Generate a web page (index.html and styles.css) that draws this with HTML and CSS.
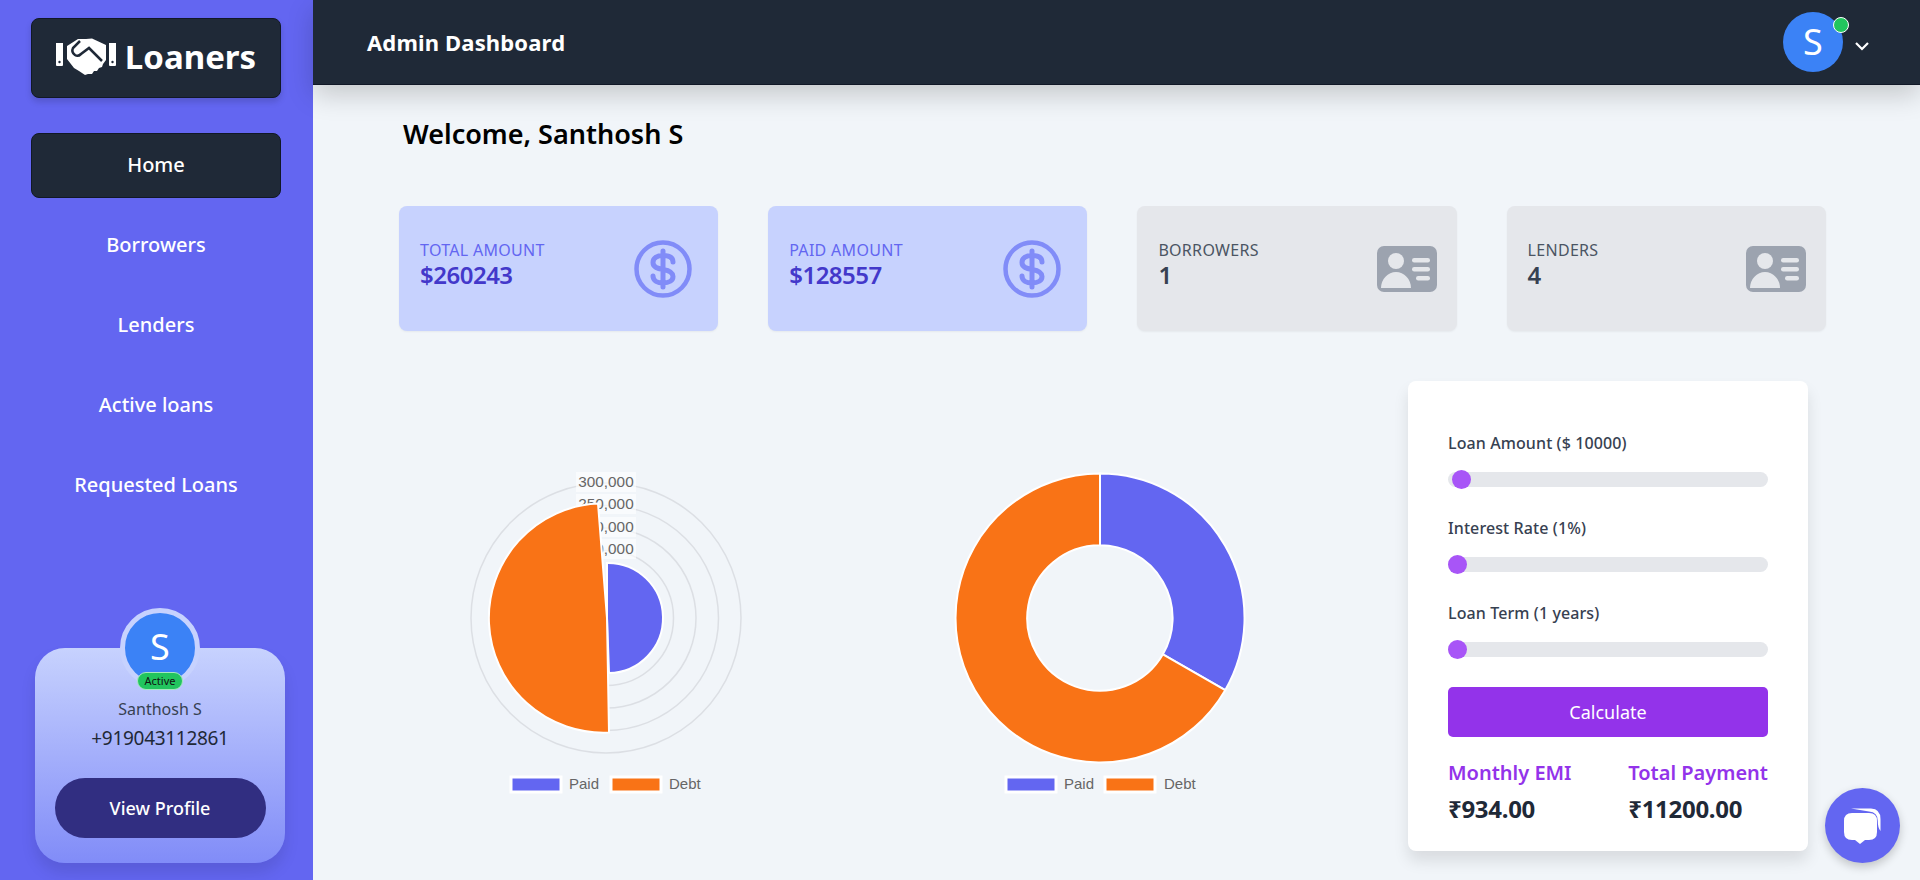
FILE: index.html
```html
<!DOCTYPE html>
<html lang="en">
<head>
    <meta charset="UTF-8">
    <title>Loaners</title>
    <link rel="stylesheet" href="styles.css">
</head>
<body>
    <aside class="sidebar">
        <div class="logo">
            <svg class="logo-icon" viewBox="0 0 60 37" aria-hidden="true">
                <path fill="#fff" d="M0 5h7v22q0 1-1 1H1q-1 0-1-1zM53 5h7v22q0 1-1 1h-5q-1 0-1-1z"/>
                <circle cx="3.500" cy="24" r="1.200" fill="#1f2937"/><circle cx="56.500" cy="24" r="1.200" fill="#1f2937"/>
                <path fill="#fff" d="M11 8L22 1h8l6-0.500L50 7v15l-3 4-1 3-3 1-2 3-3 0-2 3-4 0-3 1-6-4-5-3-7-9z"/>
                <path d="M24 3l-7 7q-2 4 2 7 3 2 6-1l8-6 13 13" fill="none" stroke="#1f2937" stroke-width="2.500"/>
            </svg>
            <span>Loaners</span>
        </div>
        <nav class="nav">
            <a class="nav-item active" href="#">Home</a>
            <a class="nav-item" href="#">Borrowers</a>
            <a class="nav-item" href="#">Lenders</a>
            <a class="nav-item" href="#">Active loans</a>
            <a class="nav-item" href="#">Requested Loans</a>
        </nav>
        <div class="profile">
            <div class="profile-avatar">S<span class="badge">Active</span></div>
            <p class="profile-name">Santhosh S</p>
            <p class="profile-phone">+919043112861</p>
            <button class="profile-button">View Profile</button>
        </div>
    </aside>

    <div class="main">
        <header class="topbar">
            <h1>Admin Dashboard</h1>
            <div class="user">
                <div class="user-avatar">S<span class="online"></span></div>
                <svg class="chevron" viewBox="0 0 16 10"><path d="M2 2l6 6 6-6" fill="none" stroke="#fff" stroke-width="2.200"/></svg>
            </div>
        </header>

        <section class="content">
            <h2 class="welcome">Welcome, Santhosh S</h2>

            <div class="cards">
                <div class="card card-blue">
                    <div class="card-text"><p class="card-label">TOTAL AMOUNT</p><p class="card-value">$260243</p></div>
                    <svg class="coin" viewBox="0 0 58 58"><circle cx="29" cy="29" r="26.500" class="coin-line"/><path d="M39 22C39 17 34 15.500 29 15.500 23 15.500 19 18 19 22.500 19 27.500 24 28.500 29 29.500 35 30.500 39 32 39 36.500 39 40.500 35 43 29 43 24 43 19 41 19 36M29 11V47" class="coin-line coin-dollar"/></svg>
                </div>
                <div class="card card-blue">
                    <div class="card-text"><p class="card-label">PAID AMOUNT</p><p class="card-value">$128557</p></div>
                    <svg class="coin" viewBox="0 0 58 58"><circle cx="29" cy="29" r="26.500" class="coin-line"/><path d="M39 22C39 17 34 15.500 29 15.500 23 15.500 19 18 19 22.500 19 27.500 24 28.500 29 29.500 35 30.500 39 32 39 36.500 39 40.500 35 43 29 43 24 43 19 41 19 36M29 11V47" class="coin-line coin-dollar"/></svg>
                </div>
                <div class="card card-grey">
                    <div class="card-text"><p class="card-label">BORROWERS</p><p class="card-value">1</p></div>
                    <svg class="idcard" viewBox="0 0 60 46"><rect width="60" height="46" rx="7" fill="#9ca3af"/><circle cx="19" cy="15" r="8" fill="#e5e7eb"/><path d="M4 42C4 33 11 26 19 26 27 26 34 33 34 42z" fill="#e5e7eb"/><rect x="35" y="12" width="18" height="4.500" rx="2.200" fill="#e5e7eb"/><rect x="35" y="21" width="18" height="4.500" rx="2.200" fill="#e5e7eb"/><rect x="39" y="30" width="14" height="4.500" rx="2.200" fill="#e5e7eb"/></svg>
                </div>
                <div class="card card-grey">
                    <div class="card-text"><p class="card-label">LENDERS</p><p class="card-value">4</p></div>
                    <svg class="idcard" viewBox="0 0 60 46"><rect width="60" height="46" rx="7" fill="#9ca3af"/><circle cx="19" cy="15" r="8" fill="#e5e7eb"/><path d="M4 42C4 33 11 26 19 26 27 26 34 33 34 42z" fill="#e5e7eb"/><rect x="35" y="12" width="18" height="4.500" rx="2.200" fill="#e5e7eb"/><rect x="35" y="21" width="18" height="4.500" rx="2.200" fill="#e5e7eb"/><rect x="39" y="30" width="14" height="4.500" rx="2.200" fill="#e5e7eb"/></svg>
                </div>
            </div>

            <div class="lower">
                <svg class="chart chart-polar" viewBox="0 0 300 350">
                    <g fill="none" stroke="#dcdfe4" stroke-width="1.500">
                        <circle cx="150" cy="170" r="135"/><circle cx="150" cy="170" r="112.500"/><circle cx="150" cy="170" r="90"/><circle cx="150" cy="170" r="67.500"/>
                    </g>
                    <g class="tick">
                        <rect x="120" y="24" width="60" height="20"/><text x="150" y="39">300,000</text>
                        <rect x="120" y="46" width="60" height="20"/><text x="150" y="61">250,000</text>
                        <rect x="120" y="69" width="60" height="20"/><text x="150" y="84">200,000</text>
                        <rect x="120" y="91" width="60" height="20"/><text x="150" y="106">150,000</text>
                    </g>
                    <path d="M151 115A55 55 0 0 1 153 225L151 170z" fill="#6366f1" stroke="#fff" stroke-width="2"/>
                    <path d="M153 284.500A114.500 114.500 0 1 1 142 55.500L151 170z" fill="#f97316" stroke="#fff" stroke-width="2"/>
                    <g class="legend">
                        <rect x="55" y="329" width="50" height="15" fill="#6366f1"/><text x="113" y="341">Paid</text>
                        <rect x="155" y="329" width="50" height="15" fill="#f97316"/><text x="213" y="341">Debt</text>
                    </g>
                </svg>
                <svg class="chart chart-donut" viewBox="0 0 300 350">
                    <path d="M150 25.500A144.500 144.500 0 0 1 275.200 242.200L212.900 206.300A72.700 72.700 0 0 0 150 97.300z" fill="#6366f1" stroke="#fff" stroke-width="2"/>
                    <path d="M275.200 242.200A144.500 144.500 0 1 1 150 25.500V97.300A72.700 72.700 0 1 0 212.900 206.300z" fill="#f97316" stroke="#fff" stroke-width="2"/>
                    <g class="legend">
                        <rect x="56" y="329" width="50" height="15" fill="#6366f1"/><text x="114" y="341">Paid</text>
                        <rect x="155" y="329" width="50" height="15" fill="#f97316"/><text x="214" y="341">Debt</text>
                    </g>
                </svg>

                <div class="calc">
                    <label class="calc-label">Loan Amount ($ 10000)</label>
                    <div class="slider"><span class="thumb thumb-first"></span></div>
                    <label class="calc-label">Interest Rate (1%)</label>
                    <div class="slider"><span class="thumb"></span></div>
                    <label class="calc-label">Loan Term (1 years)</label>
                    <div class="slider"><span class="thumb"></span></div>
                    <button class="calc-button">Calculate</button>
                    <div class="results">
                        <div><p class="result-label">Monthly EMI</p><p class="result-value">₹934.00</p></div>
                        <div><p class="result-label">Total Payment</p><p class="result-value">₹11200.00</p></div>
                    </div>
                </div>
            </div>
        </section>
    </div>

    <button class="chat">
        <svg viewBox="0 0 75 75" width="75" height="75">
            <path d="M26 20.500H46Q55.500 21 55.500 31V43Q52.800 40 52.800 33 52.800 24 44 23.500z" fill="#fff"/>
            <path d="M27 25H44Q52 25 52 33V44Q52 52 44 52H40L35 56 30 52H27Q19 52 19 44V33Q19 25 27 25z" fill="#fff"/>
        </svg>
    </button>
</body>
</html>
```

FILE: styles.css
```css
/* colours */
:root {
  --indigo: #6366f1;
  --slate: #1f2937;
  --purple: #9333ea;
}

* {
  box-sizing: border-box;
}

body {
  margin: 0;
  height: 880px;
  overflow: hidden;
  display: flex;
  font-family: "Noto Sans", sans-serif;
  background-color: #f1f5f9;
  color: var(--slate);
}

p, h1, h2 {
  margin: 0;
}

/* sidebar */
.sidebar {
  width: 313px;
  flex-shrink: 0;
  background-color: var(--indigo);
  padding: 18px 32px 17px 31px;
  display: flex;
  flex-direction: column;
  align-items: stretch;
}

.logo {
  height: 80px;
  padding-bottom: 4px;
  display: flex;
  align-items: center;
  justify-content: center;
  gap: 9px;
  background-color: var(--slate);
  border: 1px solid #111827;
  border-radius: 8px;
  box-shadow: 0 4px 6px rgba(0, 0, 0, 0.15);
  color: #fff;
  font-size: 33px;
  font-weight: 700;
}

.logo-icon {
  width: 60px;
  height: 37px;
}

.nav {
  margin-top: 35px;
  display: flex;
  flex-direction: column;
  gap: 15px;
}

.nav-item {
  height: 65px;
  padding-bottom: 3px;
  display: flex;
  align-items: center;
  justify-content: center;
  color: #fff;
  font-size: 20px;
  font-weight: 500;
  text-decoration: none;
  border-radius: 8px;
}

.nav-item.active {
  background-color: var(--slate);
  border: 1px solid #111827;
}

.profile {
  position: relative;
  margin-top: auto;
  margin-left: 4px;
  width: 250px;
  height: 215px;
  padding-top: 50px;
  border-radius: 30px;
  background: linear-gradient(#c7d2fe, #818cf8);
  box-shadow: 0 10px 15px rgba(0, 0, 0, 0.1);
  text-align: center;
}

.profile-avatar {
  position: absolute;
  top: -40px;
  left: 85px;
  width: 80px;
  height: 80px;
  border: 5px solid #c7d2fe;
  border-radius: 50%;
  background-color: #3b82f6;
  color: #fff;
  font-size: 36px;
  line-height: 68px;
}

.badge {
  position: absolute;
  left: 12px;
  top: 59px;
  width: 46px;
  height: 18px;
  border: 1px solid #a7e8c0;
  border-radius: 9px;
  background-color: #22c55e;
  color: #111;
  font-size: 11px;
  line-height: 15px;
}

.profile-name {
  font-size: 16px;
  color: #374151;
}

.profile-phone {
  margin-top: 5px;
  font-size: 19px;
  letter-spacing: -0.3px;
  color: var(--slate);
}

.profile-button {
  margin-top: 27px;
  width: 211px;
  height: 60px;
  border: none;
  border-radius: 30px;
  background-color: #312e81;
  color: #fff;
  font-family: inherit;
  font-size: 18px;
  font-weight: 500;
}

/* main */
.main {
  flex: 1;
  min-width: 0;
  display: flex;
  flex-direction: column;
}

.topbar {
  height: 85px;
  flex-shrink: 0;
  display: flex;
  align-items: center;
  justify-content: space-between;
  padding: 0 50px 0 54px;
  background-color: var(--slate);
  border-bottom: 1px solid #111827;
  box-shadow: 0 10px 25px rgba(0, 0, 0, 0.18);
}

.topbar h1 {
  color: #fff;
  font-size: 22px;
  font-weight: 700;
  letter-spacing: 0.15px;
}

.user {
  display: flex;
  align-items: center;
  gap: 11px;
}

.user-avatar {
  position: relative;
  width: 60px;
  height: 60px;
  border-radius: 50%;
  background-color: #3b82f6;
  color: #fff;
  font-size: 36px;
  line-height: 60px;
  text-align: center;
}

.online {
  position: absolute;
  top: 5px;
  right: -6px;
  width: 16px;
  height: 16px;
  border: 1px solid #fff;
  border-radius: 50%;
  background-color: #22c55e;
}

.chevron {
  width: 16px;
  height: 10px;
  margin-top: 7px;
}

.content {
  flex: 1;
  padding: 30px 92px 0 86px;
}

.welcome {
  padding-left: 4px;
  font-size: 27px;
  line-height: 38px;
  font-weight: 600;
  color: #000;
}

.cards {
  margin-top: 53px;
  display: flex;
  gap: 50px;
}

.card {
  width: 319.200px;
  height: 125px;
  padding: 0 26px 0 21px;
  display: flex;
  align-items: center;
  justify-content: space-between;
  border-radius: 8px;
  box-shadow: 0 1px 2px rgba(0, 0, 0, 0.05);
}

.card-text {
  padding-bottom: 7px;
}

.card-label {
  font-size: 16px;
  line-height: 20px;
  letter-spacing: 0.3px;
}

.card-value {
  font-size: 24px;
  line-height: 30px;
  letter-spacing: -0.5px;
  font-weight: 600;
}

.card-blue {
  background-color: #c7d2fe;
}

.card-blue .card-label {
  color: var(--indigo);
}

.card-blue .card-value {
  color: #4338ca;
}

.card-grey {
  padding-right: 20px;
  background-color: #e5e7eb;
}

.card-grey .card-label {
  color: #4b5563;
}

.card-grey .card-value {
  color: #374151;
}

.coin {
  width: 58px;
  height: 58px;
}

.coin-line {
  fill: none;
  stroke: #818cf8;
  stroke-width: 4.500;
}

.coin-dollar {
  stroke-width: 5;
  stroke-linecap: round;
}

.idcard {
  width: 60px;
  height: 46px;
}

/* charts and calculator */
.lower {
  position: relative;
  margin-top: 50px;
  display: flex;
  align-items: flex-start;
}

.chart {
  width: 300px;
  height: 350px;
  margin-top: 67px;
}

.chart-polar {
  margin-left: 57px;
}

.chart-donut {
  margin-left: 194px;
}

.tick rect {
  fill: #fff;
  fill-opacity: 0.6;
}

.tick text {
  font-family: "Liberation Sans", sans-serif;
  font-size: 15.300px;
  fill: #666;
  text-anchor: middle;
}

.legend rect {
  stroke: #fff;
  stroke-width: 3;
}

.legend text {
  font-family: "Liberation Sans", sans-serif;
  font-size: 15px;
  fill: #666;
}

.calc {
  width: 400px;
  height: 470px;
  margin-left: 158px;
  padding: 51px 40px 0;
  background-color: #fff;
  border-radius: 8px;
  box-shadow: 0 10px 15px rgba(0, 0, 0, 0.1);
}

.calc-label {
  display: block;
  height: 22px;
  margin-bottom: 18px;
  font-size: 16px;
  line-height: 22px;
  letter-spacing: 0.1px;
  font-weight: 500;
  color: #374151;
}

.slider {
  position: relative;
  height: 15px;
  margin-bottom: 30px;
  border-radius: 8px;
  background-color: #e5e7eb;
}

.thumb {
  position: absolute;
  left: 0;
  top: -2px;
  width: 19px;
  height: 19px;
  border-radius: 50%;
  background-color: #a855f7;
}

.thumb-first {
  left: 4px;
}

.calc-button {
  display: block;
  width: 100%;
  height: 50px;
  margin-top: 15px;
  border: none;
  border-radius: 5px;
  background-color: var(--purple);
  color: #fff;
  font-family: inherit;
  font-size: 18px;
}

.results {
  margin-top: 22px;
  display: flex;
  justify-content: space-between;
}

.result-label {
  font-size: 20px;
  font-weight: 600;
  color: var(--purple);
}

.result-value {
  margin-top: 6px;
  font-size: 24px;
  font-weight: 700;
  letter-spacing: -0.3px;
}

/* chat bubble */
.chat {
  position: fixed;
  right: 20px;
  bottom: 17px;
  width: 75px;
  height: 75px;
  padding: 0;
  display: flex;
  align-items: center;
  justify-content: center;
  border: none;
  border-radius: 50%;
  background-color: var(--indigo);
  box-shadow: 0 4px 10px rgba(0, 0, 0, 0.2);
}
```
